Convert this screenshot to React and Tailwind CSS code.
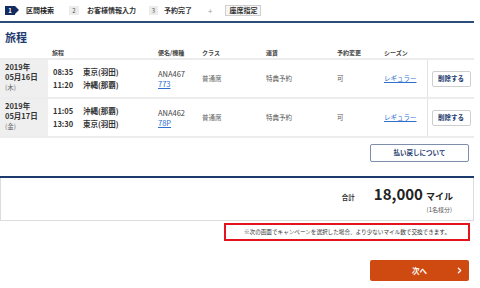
import { ChevronRight } from 'lucide-react'

const rows = [
  {
    year: '2019年', date: '05月16日', dow: '(木)',
    legs: [['08:35', '東京(羽田)'], ['11:20', '沖縄(那覇)']],
    flight: 'ANA467', plane: '773',
  },
  {
    year: '2019年', date: '05月17日', dow: '(金)',
    legs: [['11:05', '沖縄(那覇)'], ['13:30', '東京(羽田)']],
    flight: 'ANA462', plane: '78P',
  },
]

const cols = 'grid grid-cols-[48px_107px_44px_64px_71px_47px_46px_47px]'

function Steps() {
  return (
    <div className="flex items-center h-[23px] pl-[5px] border-b-2 border-[#2c4c7a] mr-[6px] text-[7px] text-[#333]">
      <div className="flex items-center">
        <div className="relative h-[9px] w-[10px] bg-[#142c60] text-white text-[6px] font-bold flex items-center justify-center leading-none">
          1
          <div className="absolute right-[-4px] top-0 w-0 h-0 border-y-[4.5px] border-y-transparent border-l-[4px] border-l-[#142c60]" />
        </div>
        <span className="ml-[11px] font-bold text-[#222]">区間検索</span>
      </div>
      <div className="flex items-center ml-[15px]">
        <div className="h-[9px] w-[10px] bg-[#ececec] text-[6px] text-[#555] flex items-center justify-center leading-none">2</div>
        <span className="ml-[8px] font-bold text-[#333]">お客様情報入力</span>
      </div>
      <div className="flex items-center ml-[13px]">
        <div className="h-[9px] w-[9px] bg-[#ececec] text-[6px] text-[#555] flex items-center justify-center leading-none">3</div>
        <span className="ml-[6px] font-bold text-[#333]">予約完了</span>
      </div>
      <span className="ml-[16px] text-[#999] text-[8px]">+</span>
      <div className="ml-[13px] border border-[#cfcfcf] bg-[#f6f6f6] px-[3px] h-[11px] flex items-center font-bold text-[#333]">座席指定</div>
    </div>
  )
}

export default function App() {
  return (
    <div className="w-[480px] h-[288px] overflow-hidden bg-white font-['Noto_Sans_CJK_JP',sans-serif] text-[#333]">
      <Steps />
      <h1 className="pl-[5px] mt-[7px] text-[11px] leading-[14px] font-bold text-[#1d3a6e]">旅程</h1>

      <div className="mr-[6px] mt-[3px]">
        <div className={`${cols} h-[11px] items-center text-[6px] font-bold text-[#444]`}>
          <div />
          <div className="pl-[4px]">旅程</div>
          <div className="pl-[3px]">便名/機種</div>
          <div className="pl-[3px]">クラス</div>
          <div className="pl-[3px]">運賃</div>
          <div className="pl-[3px]">予約変更</div>
          <div className="pl-[3px]">シーズン</div>
          <div />
        </div>

        {rows.map(r => (
          <div key={r.date} className={`${cols} h-[39px] border-t-2 border-[#ececec] text-[7px]`}>
            <div className="bg-[#efefef] pl-[5px] pt-[2px] leading-[10px]">
              <div className="font-bold text-[#333] text-[7.5px]">{r.year}</div>
              <div className="font-bold text-[#333] text-[7.5px]">{r.date}</div>
              <div className="text-[#666] text-[6.5px]">{r.dow}</div>
            </div>
            <div className="pl-[5px] flex flex-col justify-center gap-[3px] font-bold text-[7.5px] text-[#333]">
              {r.legs.map(([t, p]) => (
                <div key={t} className="flex leading-[10px]">
                  <span className="w-[30px]">{t}</span>
                  <span>{p}</span>
                </div>
              ))}
            </div>
            <div className="pl-[3px] flex flex-col justify-center leading-[10px] text-[7.5px]">
              <div className="text-[#444]">{r.flight}</div>
              <div className="text-[#2f6fcf] underline">{r.plane}</div>
            </div>
            <div className="pl-[3px] flex items-center text-[#666] text-[6.5px]">普通席</div>
            <div className="pl-[3px] flex items-center text-[#555] text-[6.5px]">特典予約</div>
            <div className="pl-[3px] flex items-center text-[#555] text-[6.5px]">可</div>
            <div className="pl-[3px] flex items-center text-[#2f6fcf] underline text-[6.5px]">レギュラー</div>
            <div className="border-l border-[#e3e3e3] flex items-center justify-center">
              <button className="h-[16px] w-[39px] border border-[#cfcfcf] rounded-[2px] bg-white text-[6.5px] font-bold text-[#1d3a6e]">削除する</button>
            </div>
          </div>
        ))}
        <div className="border-t-2 border-[#ececec]" />
      </div>

      <div className="flex justify-end mr-[11px] mt-[6px]">
        <button className="h-[18px] w-[99px] border border-[#7f8ea8] rounded-[2px] bg-white text-[6.5px] font-bold text-[#1d3a6e]">払い戻しについて</button>
      </div>

      <div className="mt-[14px] mr-[6px] border-t-2 border-[#1d3a6e]">
        <div className="h-[43px] border-x border-b border-[#dcdcdc] flex flex-col items-end pr-[20px] pt-[6px]">
          <div className="flex items-baseline">
            <span className="text-[6.5px] font-bold text-[#333] mr-[19px]">合計</span>
            <span className="text-[15px] font-bold text-[#222] leading-[20px]">18,000</span>
            <span className="text-[9px] font-bold text-[#222] ml-[3px]">マイル</span>
          </div>
          <div className="text-[6px] text-[#555] mt-[1px] mr-[1px]">(1名様分)</div>
        </div>
      </div>

      <div className="flex justify-end mr-[10px] mt-[2px]">
        <div className="w-[246px] h-[18px] border-2 border-[#e5131d] flex items-center justify-center text-[5.6px] text-[#333] whitespace-nowrap">
          ※次の画面でキャンペーンを選択した場合、より少ないマイル数で交換できます。
        </div>
      </div>

      <div className="flex justify-end mr-[11px] mt-[19px]">
        <button className="relative h-[21px] w-[99px] rounded-[2px] bg-[#cf4a10] text-white text-[7.5px] font-bold flex items-center justify-center">
          次へ
          <ChevronRight className="absolute right-[5px] top-[6px] w-[9px] h-[9px]" strokeWidth={3.5} />
        </button>
      </div>
    </div>
  )
}
